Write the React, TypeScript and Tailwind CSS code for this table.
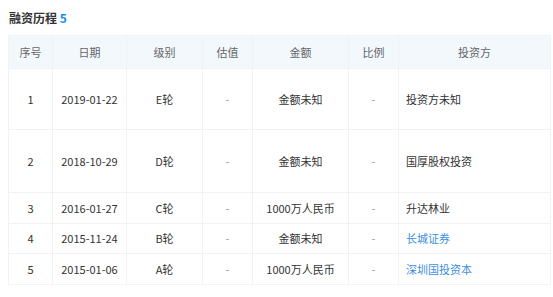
const rows = [
  { no: "1", date: "2019-01-22", round: "E轮", val: "-", amount: "金额未知", ratio: "-", investor: "投资方未知", link: false, h: "h-[61px]" },
  { no: "2", date: "2018-10-29", round: "D轮", val: "-", amount: "金额未知", ratio: "-", investor: "国厚股权投资", link: false, h: "h-[63px]" },
  { no: "3", date: "2016-01-27", round: "C轮", val: "-", amount: "1000万人民币", ratio: "-", investor: "升达林业", link: false, h: "h-[31px]" },
  { no: "4", date: "2015-11-24", round: "B轮", val: "-", amount: "金额未知", ratio: "-", investor: "长城证券", link: true, h: "h-[30px]" },
  { no: "5", date: "2015-01-06", round: "A轮", val: "-", amount: "1000万人民币", ratio: "-", investor: "深圳国投资本", link: true, h: "h-[31px]" },
];

const widths = ["w-[44px]", "w-[74px]", "w-[76px]", "w-[50px]", "w-[96px]", "w-[50px]", "w-[152px]"];
const headers = ["序号", "日期", "级别", "估值", "金额", "比例", "投资方"];

export default function App() {
  return (
    <div className="w-[553px] h-[297px] bg-white pl-[8px] pt-[10px] font-['Noto_Sans_CJK_SC',sans-serif]">
      <h2 className="text-[12px] font-bold text-[#333] leading-[16px] pl-[1px]">
        融资历程 <span className="text-[#128bed]">5</span>
      </h2>
      <table className="mt-[9px] border-collapse table-fixed w-[542px] text-[11px]">
        <colgroup>
          {widths.map((w, i) => (
            <col key={i} className={w} />
          ))}
        </colgroup>
        <thead>
          <tr className="bg-[#f2f8fc] h-[33px]">
            {headers.map((h) => (
              <th key={h} className="font-normal text-[#666] border border-[#f0f2f4] text-center">
                {h}
              </th>
            ))}
          </tr>
        </thead>
        <tbody className="text-[#333]">
          {rows.map((r) => (
            <tr key={r.no} className={r.h}>
              <td className="border border-[#f0f2f4] text-center">{r.no}</td>
              <td className="border border-[#f0f2f4] text-center">{r.date}</td>
              <td className="border border-[#f0f2f4] text-center">{r.round}</td>
              <td className="border border-[#f0f2f4] text-center text-[#999]">{r.val}</td>
              <td className="border border-[#f0f2f4] text-center">{r.amount}</td>
              <td className="border border-[#f0f2f4] text-center text-[#999]">{r.ratio}</td>
              <td className={`border border-[#f0f2f4] pl-[7px] ${r.link ? "text-[#3c8fe0]" : ""}`}>
                {r.investor}
              </td>
            </tr>
          ))}
        </tbody>
      </table>
    </div>
  );
}
